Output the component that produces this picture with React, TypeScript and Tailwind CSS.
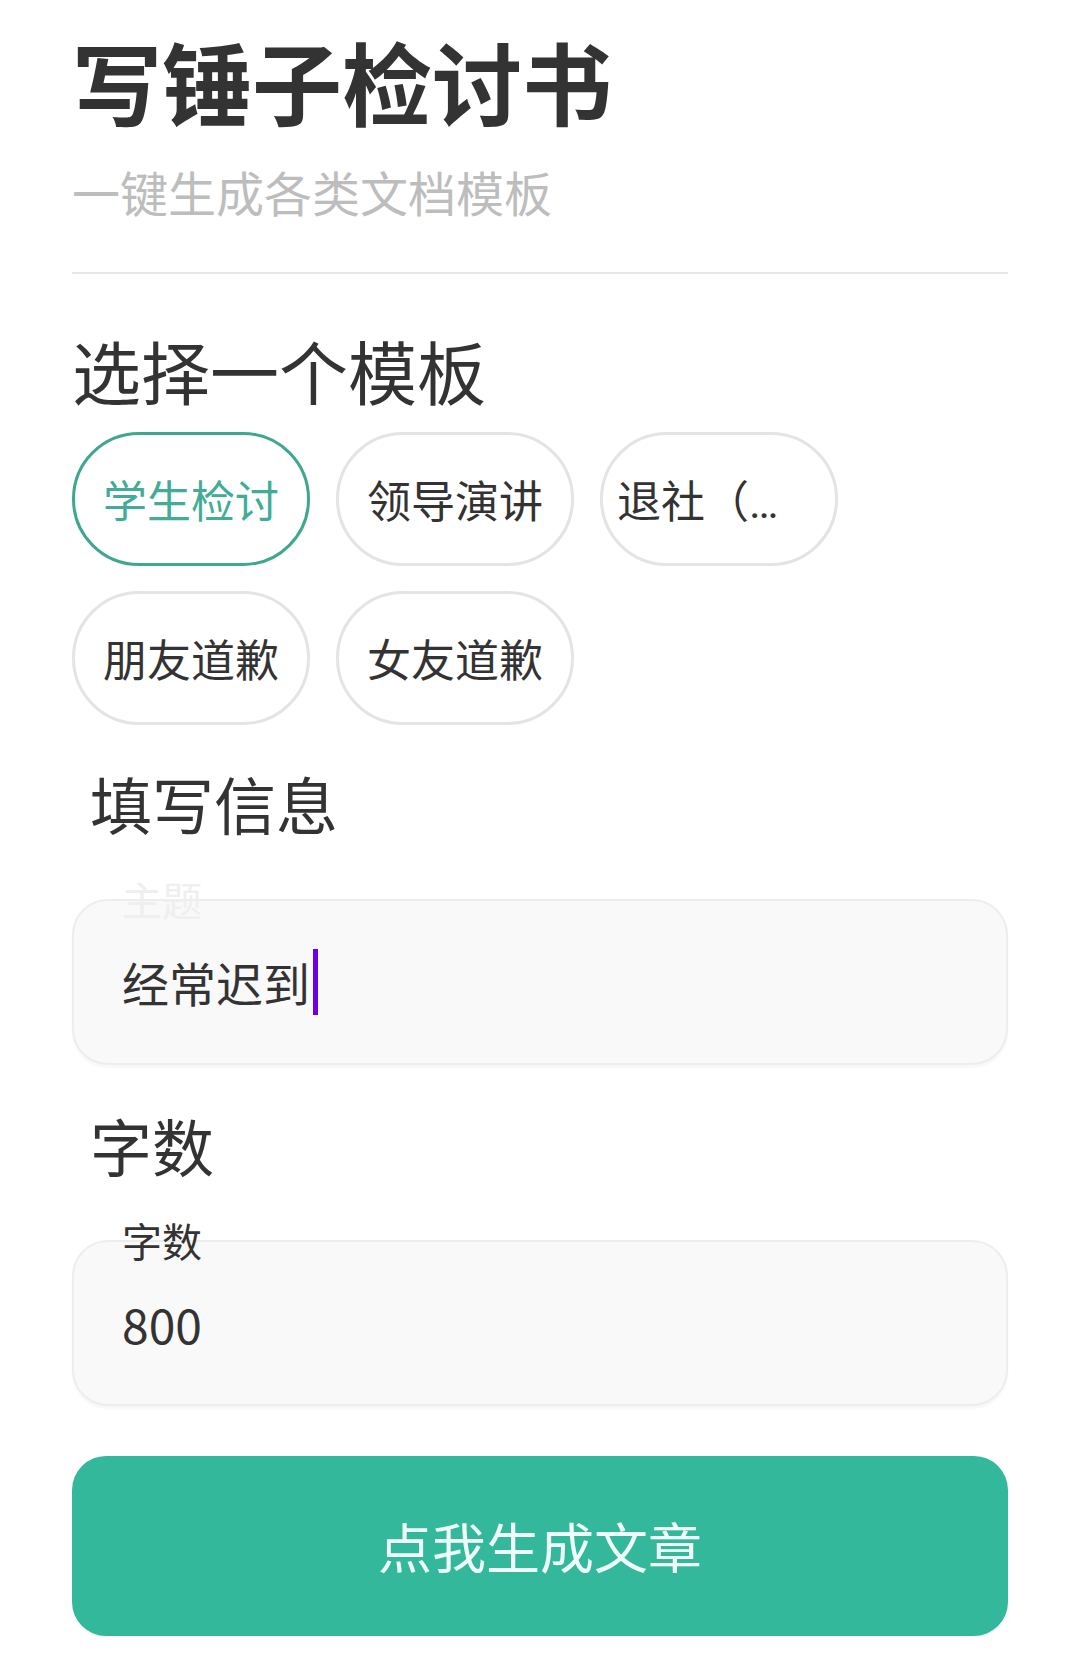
import React from "react";

const chips = [
  { label: "学生检讨", active: true, long: false },
  { label: "领导演讲", active: false, long: false },
  { label: "退社（社团）", active: false, long: true },
  { label: "朋友道歉", active: false, long: false },
  { label: "女友道歉", active: false, long: false },
];

function Field({
  label,
  labelClass,
  children,
}: {
  label: string;
  labelClass: string;
  children: React.ReactNode;
}) {
  return (
    <div className="relative h-[166px] rounded-[36px] border-2 border-[#ededed] bg-[#f9f9f9] shadow-[0_3px_2px_rgba(0,0,0,0.03)] flex items-center pl-[48px]">
      <span
        className={`absolute left-[48px] top-[-22px] text-[40px] leading-[40px] ${labelClass}`}
      >
        {label}
      </span>
      {children}
    </div>
  );
}

export default function App() {
  return (
    <div className="min-h-[1667px] bg-white px-[72px] pt-[35px] font-['Noto_Sans_CJK_SC','Noto_Sans',sans-serif] text-[#333333]">
      <h1 className="text-[90px] leading-[90px] font-bold text-[#333333]">写锤子检讨书</h1>
      <p className="mt-[42px] text-[48px] leading-[48px] text-[#bdbdbd]">一键生成各类文档模板</p>
      <div className="mt-[57px] h-[2px] bg-[#e6e6e6]" />

      <h2 className="mt-[62px] text-[69px] leading-[69px]">选择一个模板</h2>
      <div className="mt-[27px] flex flex-wrap gap-x-[26px] gap-y-[25px] w-[800px]">
        {chips.map((c) => (
          <div
            key={c.label}
            className={
              c.active
                ? "w-[238px] h-[134px] rounded-full border-[3px] border-[#3fa68f] bg-white px-[14px] pt-[7px] flex items-center justify-center"
                : "w-[238px] h-[134px] rounded-full border-[3px] border-[#e4e4e4] bg-white px-[14px] pt-[7px] flex items-center justify-center"
            }
          >
            <span
              className={
                (c.long ? "truncate " : "whitespace-nowrap ") +
                (c.active
                  ? "block w-full text-center font-['Roboto','Noto_Sans_CJK_SC',sans-serif] text-[44px] leading-[64px] text-[#42ac96]"
                  : "block w-full text-center font-['Roboto','Noto_Sans_CJK_SC',sans-serif] text-[44px] leading-[64px] text-[#333333]")
              }
            >
              {c.label}
            </span>
          </div>
        ))}
      </div>

      <h2 className="mt-[47px] pl-[18px] text-[62px] leading-[62px]">填写信息</h2>
      <div className="mt-[65px]">
        <Field label="主题" labelClass="text-[#efefef]">
          <span className="text-[47px] leading-[66px] text-[#333333]">经常迟到</span>
          <span className="ml-[3px] w-[5px] h-[66px] bg-[#6a00e8]" />
        </Field>
      </div>

      <h2 className="mt-[49px] pl-[18px] text-[62px] leading-[62px]">字数</h2>
      <div className="mt-[64px]">
        <Field label="字数" labelClass="text-[#333333]">
          <span className="text-[48px] leading-[66px] text-[#333333]">800</span>
        </Field>
      </div>

      <button className="mt-[50px] w-full h-[180px] rounded-[34px] bg-[#34b89b] text-[54px] leading-[54px] text-[#effcf8] flex items-center justify-center">
        点我生成文章
      </button>
    </div>
  );
}
